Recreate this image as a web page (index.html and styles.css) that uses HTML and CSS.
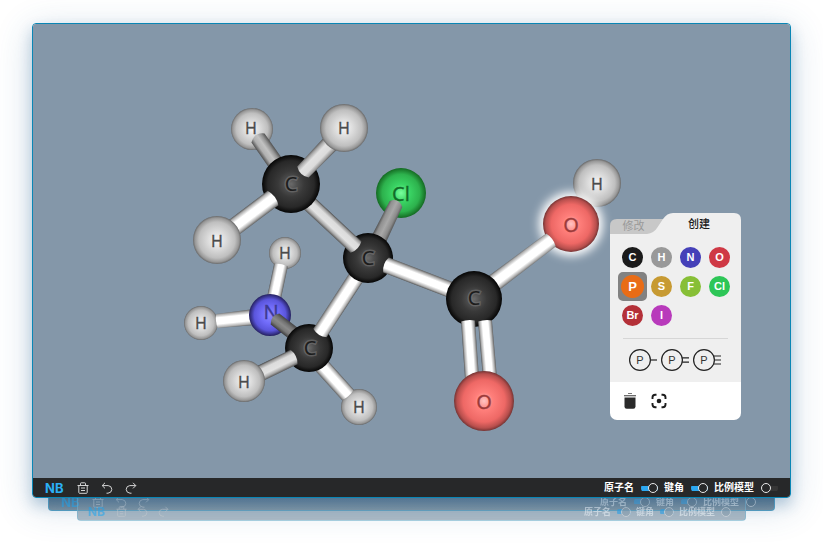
FILE: index.html
```
<!DOCTYPE html>
<html lang="zh-CN">
<head>
<meta charset="utf-8">
<meta name="viewport" content="width=device-width, initial-scale=1">
<title>NB</title>
<link rel="stylesheet" href="styles.css">
</head>
<body>
<svg class="defs" aria-hidden="true">
  <defs>
    <symbol id="i-trash" viewBox="0 0 12 12"><path d="M.5 3.500h11M3.500 3.500v-2q0-.7.7-.7h3.600q.7 0 .7.700v2M1.800 3.500v7q0 .8.8.8h6.800q.8 0 .8-.8v-7M4 6h4M4 8.500h4"/></symbol>
    <symbol id="i-undo" viewBox="0 0 12 12"><path d="M4 .8 1.200 3.600 4 6.400M1.200 3.600h6q3.400.3 3.600 3.800-.2 3.500-3.800 3.800H5.500"/></symbol>
    <symbol id="i-redo" viewBox="0 0 12 12"><path d="m8 .8 2.800 2.800L8 6.400M10.800 3.600h-6Q1.400 3.900 1.200 7.400q.2 3.500 3.800 3.800h1.500"/></symbol>
  </defs>
</svg>

<main class="window">
  <section class="stage">
    <svg class="molecule" viewBox="33 24 757 454" role="img" aria-label="分子模型">
      <defs>
        <linearGradient id="b-white" x1="0" y1="0" x2="0" y2="1"><stop offset="0" stop-color="#606060"/><stop offset=".12" stop-color="#b0b0b0"/><stop offset=".3" stop-color="#fff"/><stop offset=".7" stop-color="#fff"/><stop offset=".9" stop-color="#b0b0b0"/><stop offset="1" stop-color="#5a5a5a"/></linearGradient>
        <linearGradient id="b-light" x1="0" y1="0" x2="0" y2="1"><stop offset="0" stop-color="#555"/><stop offset=".15" stop-color="#a8a8a8"/><stop offset=".35" stop-color="#e2e2e2"/><stop offset=".7" stop-color="#dcdcdc"/><stop offset=".9" stop-color="#999"/><stop offset="1" stop-color="#4c4c4c"/></linearGradient>
        <linearGradient id="b-gray" x1="0" y1="0" x2="0" y2="1"><stop offset="0" stop-color="#505050"/><stop offset=".2" stop-color="#929292"/><stop offset=".45" stop-color="#c2c2c2"/><stop offset=".75" stop-color="#b0b0b0"/><stop offset="1" stop-color="#505050"/></linearGradient>
        <linearGradient id="b-mid" x1="0" y1="0" x2="0" y2="1"><stop offset="0" stop-color="#505050"/><stop offset=".2" stop-color="#8a8a8a"/><stop offset=".5" stop-color="#a8a8a8"/><stop offset=".8" stop-color="#909090"/><stop offset="1" stop-color="#4c4c4c"/></linearGradient>
        <linearGradient id="b-dark" x1="0" y1="0" x2="0" y2="1"><stop offset="0" stop-color="#444"/><stop offset=".25" stop-color="#727272"/><stop offset=".5" stop-color="#8a8a8a"/><stop offset=".75" stop-color="#787878"/><stop offset="1" stop-color="#3c3c3c"/></linearGradient>
        <radialGradient id="a-h"><stop offset="0" stop-color="#f6f6f6"/><stop offset=".35" stop-color="#dedede"/><stop offset=".75" stop-color="#bfbfbf"/><stop offset=".92" stop-color="#979797"/><stop offset="1" stop-color="#686868"/></radialGradient>
        <radialGradient id="a-c"><stop offset="0" stop-color="#6a6a6a"/><stop offset=".2" stop-color="#505050"/><stop offset=".45" stop-color="#393939"/><stop offset=".8" stop-color="#282828"/><stop offset="1" stop-color="#050505"/></radialGradient>
        <radialGradient id="a-o"><stop offset="0" stop-color="#ffc4c2"/><stop offset=".3" stop-color="#ff7f7b"/><stop offset=".7" stop-color="#ee6865"/><stop offset=".9" stop-color="#b84f4d"/><stop offset="1" stop-color="#743434"/></radialGradient>
        <radialGradient id="a-n"><stop offset="0" stop-color="#8c88ff"/><stop offset=".4" stop-color="#716cfa"/><stop offset=".75" stop-color="#5a55dc"/><stop offset="1" stop-color="#24205f"/></radialGradient>
        <radialGradient id="a-cl"><stop offset="0" stop-color="#78ff9c"/><stop offset=".35" stop-color="#3ad464"/><stop offset=".75" stop-color="#2db24d"/><stop offset="1" stop-color="#146a22"/></radialGradient>
        <filter id="halo" x="-50%" y="-50%" width="200%" height="200%"><feGaussianBlur stdDeviation="5"/></filter>
      </defs>

      <circle cx="252" cy="129" r="21" fill="url(#a-h)"/>
      <circle cx="401" cy="193" r="25" fill="url(#a-cl)"/>
      <circle cx="285" cy="253" r="16" fill="url(#a-h)"/>
      <circle cx="201" cy="323" r="17" fill="url(#a-h)"/>
      <circle cx="359" cy="407" r="18" fill="url(#a-h)"/>
      <circle cx="597" cy="183" r="24" fill="url(#a-h)"/>
      <g>
        <text x="251" y="134">H</text><text x="401" y="201" class="big t-cl">Cl</text>
        <text x="285" y="259">H</text><text x="201" y="329">H</text><text x="359" y="413">H</text><text x="597" y="190">H</text>
      </g>
      <path transform="translate(281 265) rotate(102)" d="M0-7Q-2 0 0 7H36V-7Z" fill="url(#b-white)"/>
      <path transform="translate(217 321) rotate(-6)" d="M0-7Q-2 0 0 7L38 8V-8Z" fill="url(#b-white)"/>
      <circle cx="270" cy="315" r="21" fill="url(#a-n)"/>
      <text x="271" y="319" class="big t-n">N</text>
      <path transform="translate(275 319) rotate(38)" d="M0-7Q-6 0 0 7H35V-7Z" fill="url(#b-dark)"/>
      <path transform="translate(348 395) rotate(228)" d="M0-8Q-2 0 0 8H42V-8Z" fill="url(#b-white)"/>
      <circle cx="309" cy="348" r="24" fill="url(#a-c)"/>
      <text x="310" y="355" class="big t-c">C</text>
      <path transform="translate(320 333) rotate(-57)" d="M0-8Q-4 0 0 8H70V-8Z" fill="url(#b-white)"/>
      <path transform="translate(294 357) rotate(154)" d="M0-8Q-4 0 0 8H46V-8Z" fill="url(#b-light)"/>
      <circle cx="244" cy="381" r="21" fill="url(#a-h)"/>

      <path transform="translate(396 204) rotate(116)" d="M0-7Q-7 0 0 7L44 8V-8Z" fill="url(#b-mid)"/>
      <circle cx="368" cy="258" r="25" fill="url(#a-c)"/>
      <text x="368" y="265" class="big t-c">C</text>
      <path transform="translate(356 247) rotate(223)" d="M0-8Q-4 0 0 8H72V-8Z" fill="url(#b-light)"/>
      <path transform="translate(386 265) rotate(21)" d="M0-8Q-4 0 0 8H76V-8Z" fill="url(#b-white)"/>

      <path transform="translate(258 138) rotate(55)" d="M0-8Q-7 0 0 8H38V-8Z" fill="url(#b-gray)"/>
      <circle cx="291" cy="184" r="29" fill="url(#a-c)"/>
      <text x="291" y="191" class="big t-c">C</text>
      <path transform="translate(303 172) rotate(-46)" d="M0-8Q-5 0 0 8L44 9V-9Z" fill="url(#b-light)"/>
      <path transform="translate(273 198) rotate(143)" d="M0-9Q-4 0 0 9H58V-9Z" fill="url(#b-white)"/>
      <circle cx="344" cy="128" r="24" fill="url(#a-h)"/>
      <circle cx="217" cy="240" r="24" fill="url(#a-h)"/>

      <circle cx="571" cy="224" r="32" fill="#fff" filter="url(#halo)"/>
      <circle cx="571" cy="224" r="28" fill="url(#a-o)"/>
      <path transform="translate(551 240) rotate(143)" d="M0-8Q-3 0 0 8L80 9V-9Z" fill="url(#b-white)"/>
      <circle cx="474" cy="299" r="28" fill="url(#a-c)"/>
      <path transform="translate(468 321) rotate(86)" d="M0-7Q-2 0 0 7H60V-7Z" fill="url(#b-white)"/>
      <path transform="translate(485 321) rotate(85)" d="M0-7Q-2 0 0 7H60V-7Z" fill="url(#b-white)"/>
      <circle cx="484" cy="401" r="30" fill="url(#a-o)"/>
      <g>
        <text x="344" y="134">H</text><text x="217" y="247">H</text><text x="244" y="388">H</text>
        <text x="474" y="305" class="big t-c">C</text>
        <text x="571" y="232" class="big t-o">O</text><text x="484" y="409" class="big t-o">O</text>
      </g>
    </svg>

    <aside class="panel">
      <nav class="tabs">
        <svg class="tab-shape" viewBox="0 0 131 21" preserveAspectRatio="none" aria-hidden="true">
          <path d="M0 21V13Q0 6 7 6H60V21Z" fill="#c8c8c8"/>
          <path d="M37 21Q44 20 47 15L53 6Q57 0 63 0H124Q131 0 131 7V21Z" fill="#efefef"/>
        </svg>
        <button class="tab" type="button">修改</button>
        <button class="tab active" type="button">创建</button>
      </nav>
      <div class="create">
        <div class="elements">
          <button type="button" class="el-c">C</button>
          <button type="button" class="el-h">H</button>
          <button type="button" class="el-n">N</button>
          <button type="button" class="el-o">O</button>
          <button type="button" class="el-p selected">P</button>
          <button type="button" class="el-s">S</button>
          <button type="button" class="el-f">F</button>
          <button type="button" class="el-cl">Cl</button>
          <button type="button" class="el-br">Br</button>
          <button type="button" class="el-i">I</button>
        </div>
        <div class="bonds">
          <button type="button" aria-label="单键"><svg viewBox="0 0 30 24"><circle cx="12" cy="12" r="10.400"/><path d="M22.500 12H29"/><text x="12" y="16">P</text></svg></button>
          <button type="button" aria-label="双键"><svg viewBox="0 0 30 24"><circle cx="12" cy="12" r="10.400"/><path d="M22.200 9.800H29M22.200 14.200H29"/><text x="12" y="16">P</text></svg></button>
          <button type="button" aria-label="三键"><svg viewBox="0 0 30 24"><circle cx="12" cy="12" r="10.400"/><path d="M21.500 8H29M22.500 12H29M21.500 16H29"/><text x="12" y="16">P</text></svg></button>
        </div>
      </div>
      <div class="actions">
        <button type="button" aria-label="删除"><svg viewBox="0 0 16 18"><path d="M6 1.500h4" stroke="#777"/><path d="M2 3.700h12" stroke="#666" stroke-width="1.300"/><path d="M2.500 5.500h11v9q0 2.200-2.200 2.200H4.700q-2.200 0-2.200-2.200Z" fill="#2a2a2a" stroke="none"/></svg></button>
        <button type="button" aria-label="居中"><svg viewBox="0 0 16 18"><path d="M1.500 7V5.500q0-2.700 2.700-2.700H5.500M10.500 2.800h1.300q2.700 0 2.700 2.700V7M14.500 11v1.500q0 2.700-2.700 2.700h-1.300M5.500 15.200H4.200q-2.700 0-2.700-2.700V11" stroke="#1c1c1c" stroke-width="1.900"/><circle cx="8" cy="9" r="2.300" fill="#1c1c1c"/></svg></button>
      </div>
    </aside>
  </section>

  <footer class="bar">
    <div class="tools">
      <span class="logo">NB</span>
      <button type="button" aria-label="清空"><svg><use href="#i-trash"/></svg></button>
      <button type="button" aria-label="撤销"><svg><use href="#i-undo"/></svg></button>
      <button type="button" aria-label="重做"><svg><use href="#i-redo"/></svg></button>
    </div>
    <div class="options">
      <label>原子名<input class="switch on" type="checkbox" checked></label>
      <label>键角<input class="switch on" type="checkbox" checked></label>
      <label>比例模型<input class="switch" type="checkbox"></label>
    </div>
  </footer>
</main>

<div class="echo near" aria-hidden="true">
  <div class="bar">
    <div class="tools">
      <span class="logo">NB</span>
      <svg><use href="#i-trash"/></svg><svg><use href="#i-undo"/></svg><svg><use href="#i-redo"/></svg>
    </div>
    <div class="options">
      <span>原子名<i class="switch on"></i></span><span>键角<i class="switch on"></i></span><span>比例模型<i class="switch"></i></span>
    </div>
  </div>
</div>
<div class="echo far" aria-hidden="true">
  <div class="bar">
    <div class="tools">
      <span class="logo">NB</span>
      <svg><use href="#i-trash"/></svg><svg><use href="#i-undo"/></svg><svg><use href="#i-redo"/></svg>
    </div>
    <div class="options">
      <span>原子名<i class="switch on"></i></span><span>键角<i class="switch on"></i></span><span>比例模型<i class="switch"></i></span>
    </div>
  </div>
</div>
</body>
</html>
```

FILE: styles.css
```
* { box-sizing: border-box; }

body {
  margin: 0;
  min-height: 100vh;
  padding: 23px 32px 29px;
  display: flex;
  flex-direction: column;
  background: #fff;
  font-family: "Liberation Sans", "Noto Sans CJK SC", sans-serif;
  overflow: hidden;
}

button {
  border: 0;
  padding: 0;
  background: none;
  font: inherit;
  color: inherit;
  cursor: pointer;
}

svg { display: block; }
.defs { position: absolute; width: 0; height: 0; }

.window {
  position: relative;
  z-index: 3;
  flex: 1;
  display: flex;
  flex-direction: column;
  border: 1px solid #0a86b5;
  border-radius: 4px;
  box-shadow: 0 7px 14px rgba(40, 100, 150, .28), 0 8px 36px rgba(40, 100, 150, .24);
}

.stage {
  position: relative;
  flex: 1;
  min-height: 0;
  background: #8497a9;
  border-radius: 3px 3px 0 0;
}

.molecule { width: 100%; height: 100%; }

.molecule text {
  font: 16px "Noto Sans", sans-serif;
  text-anchor: middle;
  fill: #4b4b4b;
  stroke: #4b4b4b;
  stroke-width: .3px;
}
.molecule text.big { font-size: 20px; }
.molecule text.t-c { fill: #1c1c1c; stroke: #8a8a8a; stroke-width: 3px; stroke-opacity: .4; paint-order: stroke; }
.molecule text.t-o { fill: #9c3b3a; stroke: #9c3b3a; }
.molecule text.t-n { fill: #3d3a91; stroke: #3d3a91; }
.molecule text.t-cl { fill: #126b28; stroke: #126b28; }

/* floating palette */
.panel {
  position: absolute;
  top: 189px;
  right: 49px;
  width: 131px;
}

.tabs {
  position: relative;
  height: 21px;
  display: flex;
}
.tab-shape { position: absolute; inset: 0; width: 100%; height: 100%; }
.tab {
  position: relative;
  flex: 47;
  padding-top: 5px;
  font-size: 11px;
  line-height: 16px;
  color: #999;
}
.tab.active { flex: 84; padding: 1px 0 0; color: #1a1a1a; font-weight: 500; }

.create { padding: 9px 8px; background: #efefef; }

.elements {
  display: grid;
  grid-template-columns: repeat(4, 29px);
  grid-auto-rows: 29px;
  place-items: center;
}
.elements button {
  width: 21px;
  height: 21px;
  border-radius: 50%;
  color: #fff;
  font-size: 11px;
  font-weight: bold;
  line-height: 21px;
}
.elements .selected {
  width: 29px;
  height: 29px;
  border: 2px solid #828282;
  border-radius: 5px;
  line-height: 25px;
  font-size: 13px;
  background: radial-gradient(circle, #e96c16 11px, #828282 12px);
}
.el-c { background: #1b1b1b; }
.el-h { background: #999; }
.el-n { background: #4540b8; }
.el-o { background: #cf3945; }
.el-s { background: #c79a32; }
.el-f { background: #87bf36; }
.el-cl { background: #2dc657; }
.el-br { background: #b43038; }
.el-i { background: #b83abb; }

.bonds {
  display: flex;
  gap: 2px;
  margin: 8px 5px 0;
  padding: 9px 0 1px 5px;
  border-top: 1px solid #d6d6d6;
}
.bonds svg { width: 30px; height: 24px; fill: none; stroke: #222; stroke-width: 1.2; }
.bonds text { font: 11px "Liberation Sans", sans-serif; text-anchor: middle; fill: #333; stroke: none; }

.actions {
  display: flex;
  gap: 13px;
  padding: 10px 12px;
  background: #fff;
  border-radius: 0 0 7px 7px;
}
.actions svg { width: 16px; height: 18px; fill: none; }

/* bottom bar */
.bar {
  display: flex;
  align-items: center;
  justify-content: space-between;
  height: 19px;
  padding: 1px 12px 0;
  background: #272829;
  border-radius: 0 0 3px 3px;
  color: #fff;
  font-size: 10px;
  font-weight: bold;
  line-height: 16px;
}
.tools, .options, .options label, .options span { display: flex; align-items: center; }
.tools { gap: 12px; }
.tools svg { width: 12px; height: 12px; fill: none; stroke: #d5d5d5; stroke-width: 1; }
.logo { width: 20px; color: #2bb0f6; font: 700 13px/16px "Inter", sans-serif; }
.options { gap: 6px; }
.options label, .options span { gap: 7px; }

.switch {
  appearance: none;
  display: flex;
  align-items: center;
  width: 17px;
  height: 8px;
  margin: 0;
  background: linear-gradient(#363636, #363636) center / 100% 5px no-repeat;
  border-radius: 4px;
}
.switch::before {
  content: "";
  width: 8px;
  height: 8px;
  border: 1px solid #e8e8e8;
  border-radius: 50%;
  background: #272829;
}
.switch.on {
  justify-content: flex-end;
  background-image: linear-gradient(#2ba7f0, #2ba7f0);
}

/* fading copies of the bar below the window */
.echo {
  position: relative;
  z-index: 1;
  overflow: hidden;
  display: flex;
  flex-direction: column;
  justify-content: flex-end;
  border: 1px solid #5aa3c4;
  border-top: 0;
  border-radius: 0 0 4px 4px;
}
.echo .bar { flex: none; padding-top: 0; background: none; font-size: 9px; }
.echo .switch { background-image: none; }
.echo .switch.on { background-image: linear-gradient(#2ba7f0, #2ba7f0); }
.echo .switch::before { background: #667887; }

.near {
  height: 13px;
  margin: 0 16px;
  background: linear-gradient(#5f7688, #8294a2);
}
.near .bar { height: 17px; opacity: .65; }
.near .switch { width: 16px; }
.near .tools { gap: 11px; }

.far {
  height: 23px;
  margin: -13px 45px 0;
  border-color: rgba(130, 190, 215, .6);
  background: linear-gradient(rgba(170, 180, 188, .2) 13px, #b0bdc7 13px);
}
.far .bar { height: 17px; padding: 0 10px; opacity: .6; }
.far .logo { width: 18px; font-size: 12px; }
.far .switch { width: 14px; }
.far .switch::before { background: #94a4b0; }
.far .tools { gap: 10px; }
.far .tools svg { width: 11px; height: 11px; }
.far .options { gap: 5px; }
.far .options span { gap: 6px; }
```
